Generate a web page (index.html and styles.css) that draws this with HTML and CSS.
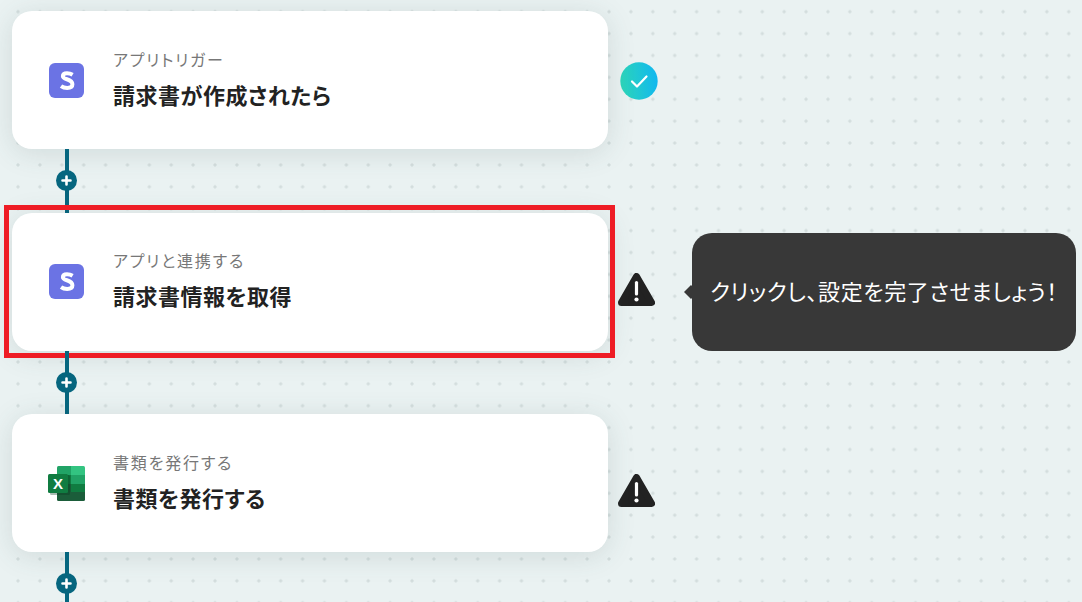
FILE: index.html
```html
<!DOCTYPE html>
<html lang="ja">
<head>
<meta charset="utf-8">
<title>フロー</title>
<link rel="stylesheet" href="styles.css">
</head>
<body>
<main class="flow">
  <section class="row">
    <article class="card">
      <svg class="app-icon" viewBox="0 0 35 35"><rect width="35" height="35" rx="6" fill="#6b73e4"/><path d="M23.6 11.800c-1.500-.9-3.600-1.500-5.600-1.500-2.500 0-4.100 1.100-4.100 3 0 3.900 9.500 2 9.500 8 0 2.400-2.100 3.600-5.200 3.600-2.200 0-4.500-.6-6.200-1.800" fill="none" stroke="#fff" stroke-width="4"/></svg>
      <div class="card-text">
        <p class="label">アプリトリガー</p>
        <h2 class="title">請求書が作成されたら</h2>
      </div>
    </article>
    <svg class="status status-ok" viewBox="0 0 38 38"><defs><linearGradient id="ok" x1="0" x2="1" y1="0.1" y2="0"><stop offset="0" stop-color="#2cd5bb"/><stop offset="1" stop-color="#0fb6f2"/></linearGradient></defs><circle cx="19" cy="19" r="18.700" fill="url(#ok)"/><path d="M12 19.500l5 5 9.500-10" fill="none" stroke="#fff" stroke-width="2.200" stroke-linecap="round" stroke-linejoin="round"/></svg>
  </section>
  <div class="link"><span class="plus"><svg viewBox="0 0 21 21"><path d="M10.500 6.500v8M6.500 10.500h8" stroke="#fff" stroke-width="2.600" stroke-linecap="round"/></svg></span></div>
  <section class="row">
    <article class="card card-selected">
      <svg class="app-icon" viewBox="0 0 35 35"><rect width="35" height="35" rx="6" fill="#6b73e4"/><path d="M23.6 11.800c-1.500-.9-3.600-1.500-5.600-1.500-2.500 0-4.100 1.100-4.100 3 0 3.900 9.500 2 9.500 8 0 2.400-2.100 3.600-5.200 3.600-2.200 0-4.500-.6-6.200-1.800" fill="none" stroke="#fff" stroke-width="4"/></svg>
      <div class="card-text">
        <p class="label">アプリと連携する</p>
        <h2 class="title">請求書情報を取得</h2>
      </div>
    </article>
    <svg class="status status-warn" viewBox="0 0 37 34"><path d="M18.500 3.500L33.500 29.500H3.500Z" fill="#222" stroke="#222" stroke-width="7" stroke-linejoin="round"/><path d="M18.500 9.500v11.500" stroke="#fff" stroke-width="3.200" stroke-linecap="round"/><circle cx="18.500" cy="26.500" r="2.100" fill="#fff"/></svg>
    <div class="tip">クリックし、設定を完了させましょう！</div>
  </section>
  <div class="link"><span class="plus"><svg viewBox="0 0 21 21"><path d="M10.500 6.500v8M6.500 10.500h8" stroke="#fff" stroke-width="2.600" stroke-linecap="round"/></svg></span></div>
  <section class="row">
    <article class="card">
      <svg class="app-icon app-icon-excel" viewBox="0 0 37 35">
        <path d="M9 1.500A1.500 1.500 0 0 1 10.500 0H23v9H9Z" fill="#21a366"/>
        <path d="M23 0h12.500A1.500 1.500 0 0 1 37 1.500V9H23Z" fill="#33c481"/>
        <rect x="9" y="9" width="14" height="9" fill="#107c41"/>
        <rect x="23" y="9" width="14" height="9" fill="#21a366"/>
        <rect x="9" y="18" width="14" height="8" fill="#185c37"/>
        <rect x="23" y="18" width="14" height="8" fill="#107c41"/>
        <path d="M9 26h28v7.500a1.500 1.500 0 0 1-1.500 1.500h-25A1.500 1.500 0 0 1 9 33.500Z" fill="#1b5d3a"/>
        <rect x="2" y="9" width="20" height="20" rx="1.500" fill="#0a3d22" opacity=".35"/>
        <rect y="8" width="20" height="19" rx="1.500" fill="#107c41"/>
        <text class="excel-x" x="10" y="23">X</text>
      </svg>
      <div class="card-text">
        <p class="label">書類を発行する</p>
        <h2 class="title">書類を発行する</h2>
      </div>
    </article>
    <svg class="status status-warn" viewBox="0 0 37 34"><path d="M18.500 3.500L33.500 29.500H3.500Z" fill="#222" stroke="#222" stroke-width="7" stroke-linejoin="round"/><path d="M18.500 9.500v11.500" stroke="#fff" stroke-width="3.200" stroke-linecap="round"/><circle cx="18.500" cy="26.500" r="2.100" fill="#fff"/></svg>
  </section>
  <div class="link"><span class="plus"><svg viewBox="0 0 21 21"><path d="M10.500 6.500v8M6.500 10.500h8" stroke="#fff" stroke-width="2.600" stroke-linecap="round"/></svg></span></div>
</main>
</body>
</html>
```
FILE: styles.css
```css
* { box-sizing: border-box; }
html, body { height: 100%; }
body {
  margin: 0;
  overflow: hidden;
  background-color: #eaf2f2;
  background-image: radial-gradient(circle, #d3dddd 1.3px, transparent 1.9px);
  background-size: 21.9px 21.9px;
  background-position: 7.05px 0.75px;
  font-family: "Noto Sans CJK JP", "Noto Sans", sans-serif;
  color: #222;
}
.flow {
  display: flex;
  flex-direction: column;
  padding: 11px 0 0 12px;
}
.row {
  display: flex;
  align-items: flex-start;
  height: 138px;
}
.card {
  position: relative;
  display: flex;
  align-items: center;
  width: 596px;
  height: 100%;
  padding-left: 36px;
  gap: 30px;
  background: #fff;
  border-radius: 20px;
  box-shadow: 0 4px 28px rgba(60, 90, 90, .15);
}
.card-selected::after {
  content: "";
  position: absolute;
  inset: -7.500px -7px -7.500px -8px;
  border: 5px solid #ee1c25;
  pointer-events: none;
}
.app-icon { width: 35px; height: 35px; flex: none; margin-left: 1px; }
.app-icon-excel { width: 37px; margin: 0 -1px 0 0; }
.excel-x { font: 700 15px "Liberation Sans", sans-serif; fill: #fff; text-anchor: middle; }
.card-text { display: flex; flex-direction: column; gap: 7px; margin-top: -3px; margin-left: -1px; }
.label { margin: 0; font-size: 16px; line-height: 24px; color: #777; font-feature-settings: "palt"; letter-spacing: 1.800px; }
.title { margin: 0; font-size: 22px; line-height: 33px; font-weight: 700; color: #222; font-feature-settings: "palt"; letter-spacing: .5px; }
.status { flex: none; margin-left: 12px; }
.status-ok { width: 38px; height: 38px; margin-top: 51px; }
.status-warn { width: 37px; height: 34px; margin-left: 10px; margin-top: 60px; }
.link {
  position: relative;
  width: 4px;
  height: 63.500px;
  margin-left: 53px;
  background: #06667f;
}
.plus {
  position: absolute;
  left: -9px;
  top: 21px;
  width: 21px;
  height: 21px;
  display: flex;
  border-radius: 50%;
  background: #06667f;
}
.plus svg { width: 21px; height: 21px; }
.tip {
  position: relative;
  flex: none;
  width: 384px;
  height: 118px;
  margin: 20.500px 0 0 37px;
  padding-bottom: 4px;
  display: flex;
  align-items: center;
  justify-content: center;
  background: #383838;
  border-radius: 20px;
  color: #fff;
  font-size: 22px;
  font-feature-settings: "palt";
  letter-spacing: .6px;
}
.tip::before {
  content: "";
  position: absolute;
  left: -8px;
  top: 52px;
  width: 14px;
  height: 14px;
  background: #383838;
  clip-path: polygon(50% 0, 100% 50%, 50% 100%, 0 50%);
}
```
